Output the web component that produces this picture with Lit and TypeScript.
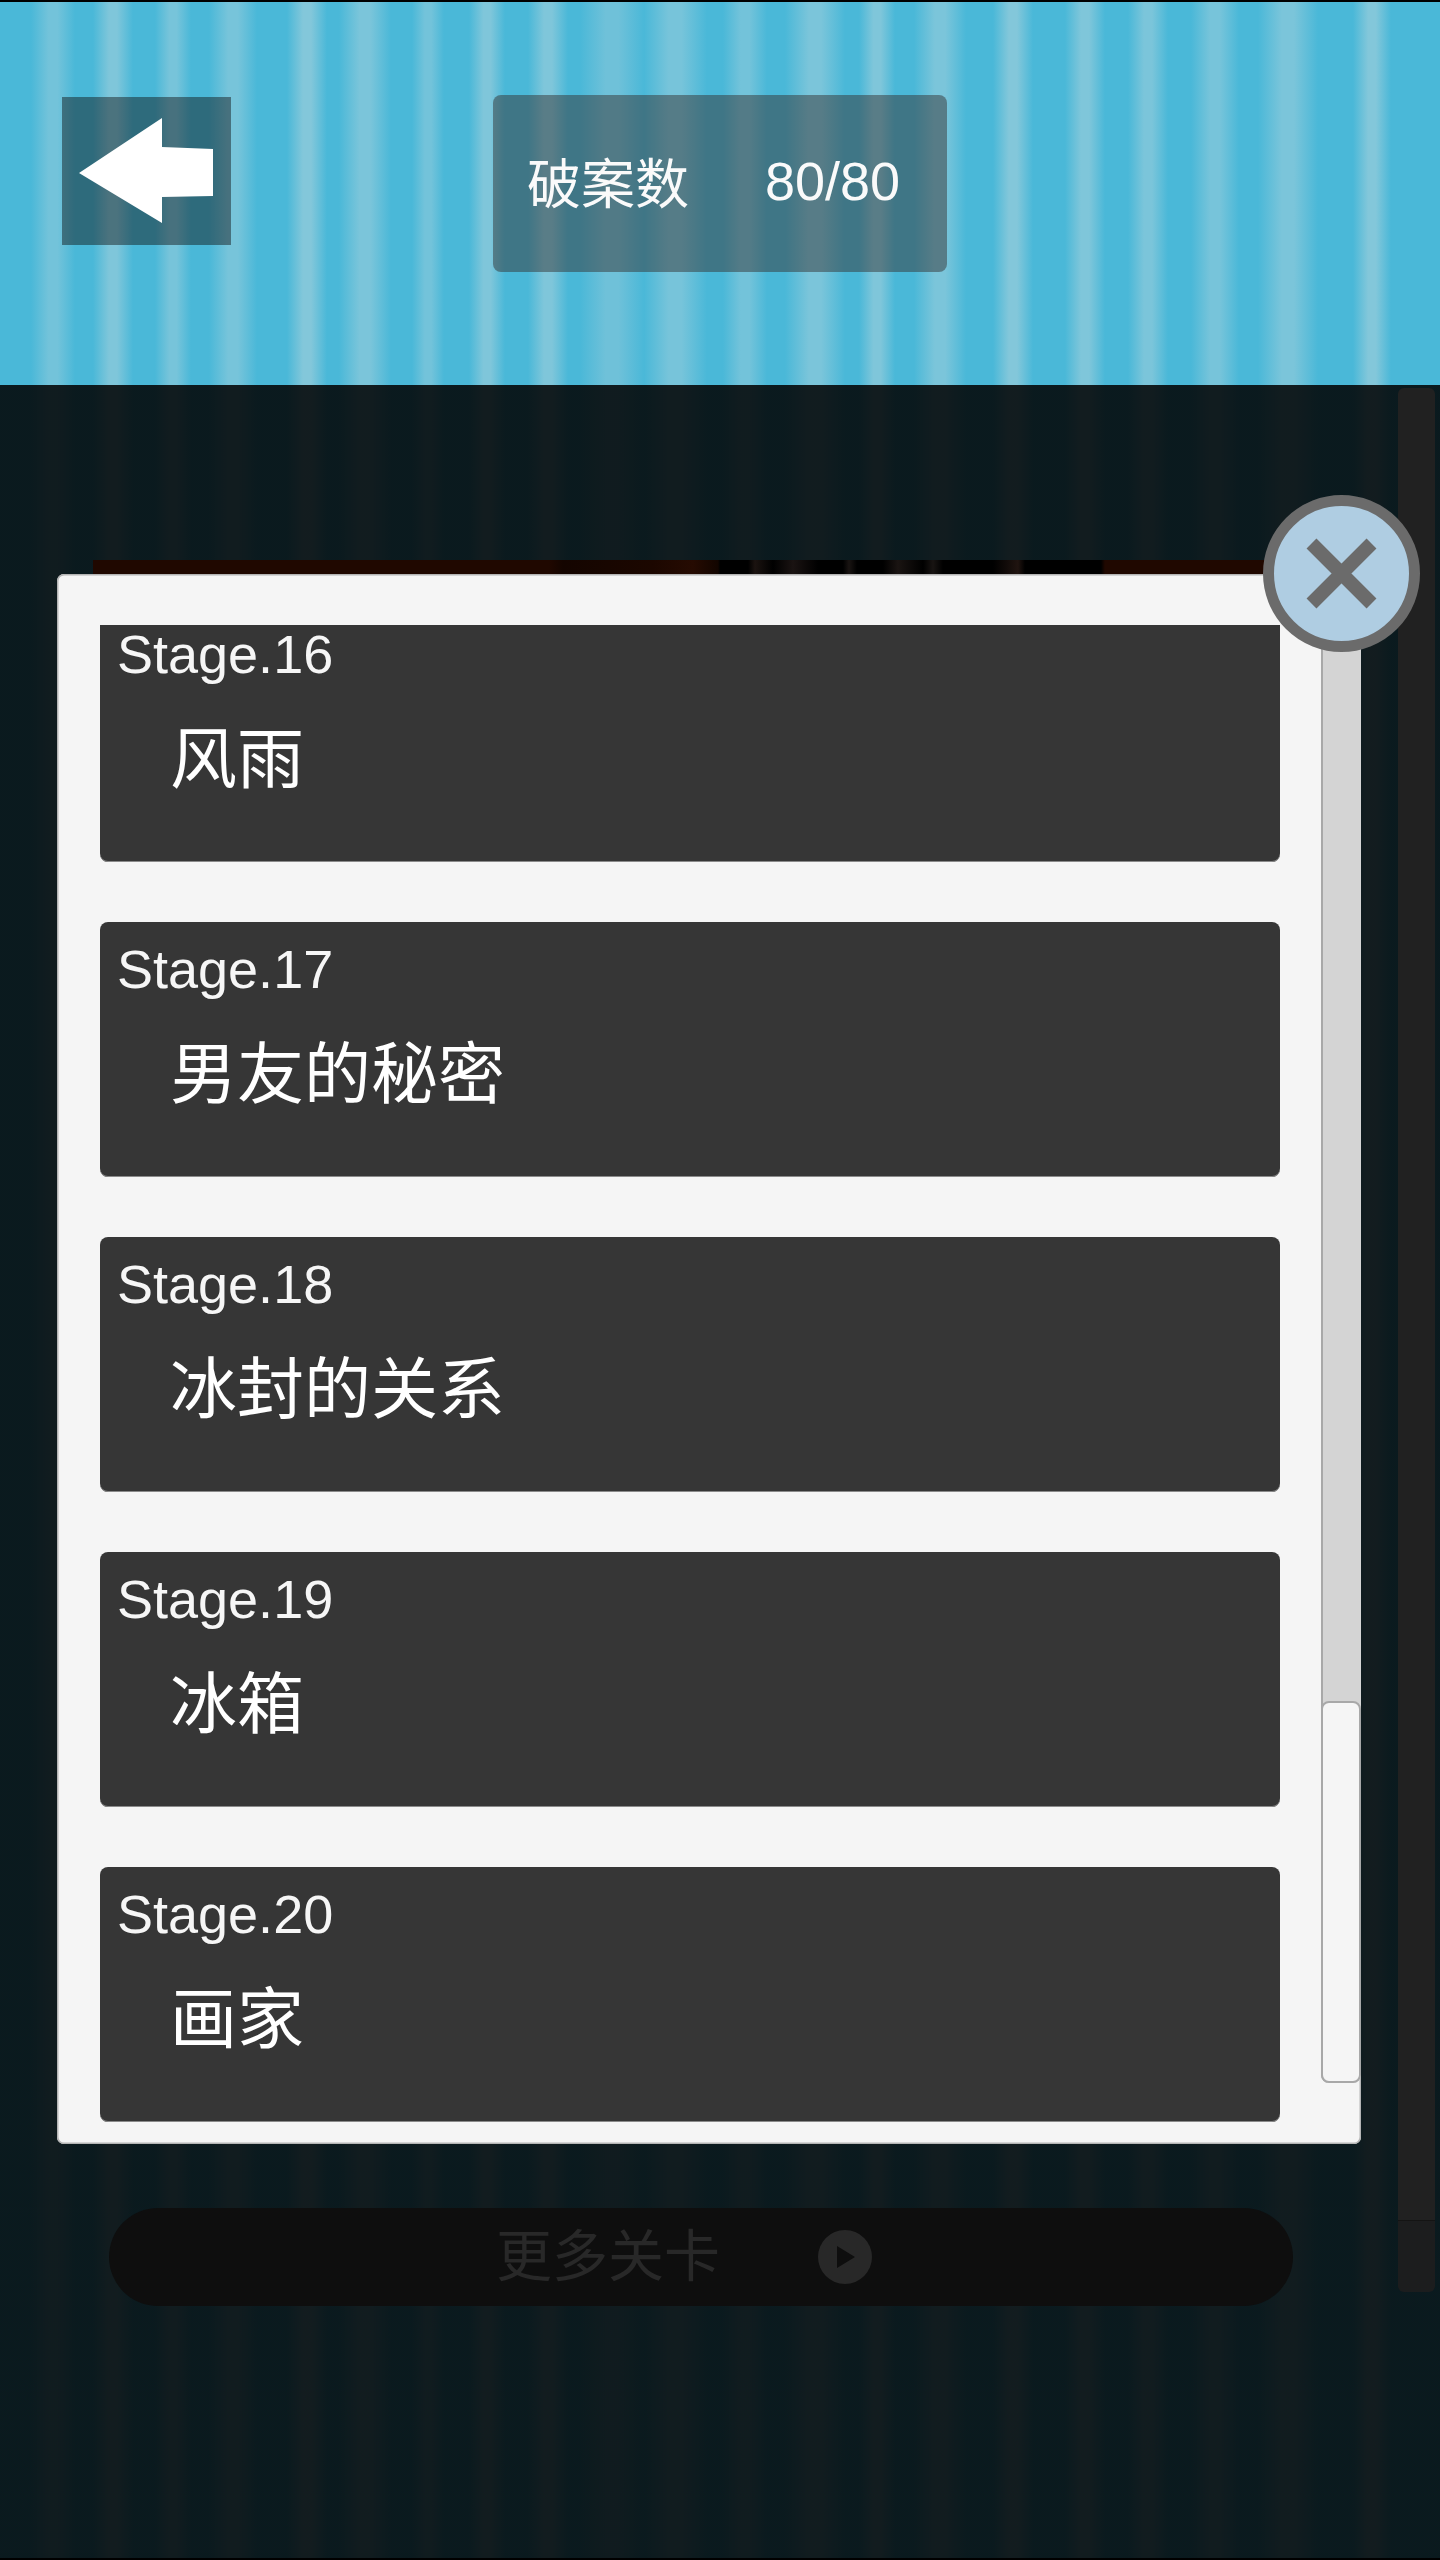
import { LitElement, html, css, unsafeCSS, svg } from "lit";
import { customElement } from "lit/decorators.js";

// centre x, half width, strength of the soft vertical bands
const bands: [number, number, number][] = [
  [53, 22, 0.5], [113, 20, 0.65], [173, 18, 0.55], [233, 24, 0.55], [307, 20, 0.7], [365, 26, 0.6],
  [428, 16, 0.5], [487, 18, 0.65], [548, 20, 0.65], [612, 32, 0.45], [675, 32, 0.55], [745, 22, 0.5],
  [815, 30, 0.6], [877, 18, 0.65], [940, 26, 0.6], [1013, 20, 0.7], [1085, 20, 0.65], [1148, 20, 0.6],
  [1215, 24, 0.55], [1288, 30, 0.6], [1372, 19, 0.7],
];
const base = [74, 184, 216];
const light = [156, 205, 219];
const mix = (t: number) => `rgb(${base.map((b, i) => Math.round(b + (light[i] - b) * t)).join(",")})`;
const stops: string[] = [`${mix(0)} 0px`];
for (const [c, w, s] of bands) {
  stops.push(`${mix(0)} ${c - w}px`, `${mix(s)} ${c - w * 0.2}px`, `${mix(s)} ${c + w * 0.2}px`, `${mix(0)} ${c + w}px`);
}
const stripes = unsafeCSS(`linear-gradient(90deg, ${stops.join(",")})`);

const stages = [
  { n: 16, t: "风雨" },
  { n: 17, t: "男友的秘密" },
  { n: 18, t: "冰封的关系" },
  { n: 19, t: "冰箱" },
  { n: 20, t: "画家" },
];

@customElement("app-root")
export class AppRoot extends LitElement {
  static styles = css`
    :host {
      display: block;
      width: 1440px;
      height: 2560px;
      background: #000;
      font-family: "Liberation Sans", "Noto Sans CJK SC", sans-serif;
      color: #fff;
    }
    .page { position: relative; width: 1440px; height: 2560px; padding: 2px 0; box-sizing: border-box; overflow: hidden; }

    .header { height: 383px; display: flex; align-items: flex-start; background: ${stripes}; }
    .back { width: 169px; height: 148px; margin: 95px 0 0 62px; background: rgba(14, 14, 14, 0.45); display: block; }
    .back svg { display: block; }
    .score {
      width: 454px; height: 177px; margin: 93px 0 0 262px; box-sizing: border-box;
      padding: 0 0 6px 34px; display: flex; align-items: center; gap: 76px;
      background: rgba(52, 52, 52, 0.5); border-radius: 8px; font-size: 54px; color: #fafafa;
    }

    .under {
      height: 2173px; display: flex; padding-right: 5px; box-sizing: border-box;
      background: linear-gradient(rgba(0, 0, 0, 0.86), rgba(0, 0, 0, 0.86)), ${stripes};
    }
    .main { flex: 1; padding: 175px 0 0 93px; }
    .banner {
      width: 1177px; height: 20px;
      background: linear-gradient(90deg,
        #200800 0, #200800 456px, #140500 470px, #1c0700 560px, #260b02 600px, #120500 625px,
        #000 627px, #000 655px, #1b1310 662px, #000 680px, #1a1312 700px, #000 725px, #000 750px,
        #191412 756px, #000 764px, #000 790px, #1a1412 805px, #000 830px, #181412 840px,
        #000 850px, #000 900px, #201410 925px, #000 932px, #000 1008px, #200800 1012px, #200800 1177px);
    }
    .more {
      width: 1184px; height: 98px; margin: 1628px 0 0 16px; padding-left: 387px; box-sizing: border-box;
      display: flex; align-items: center; gap: 98px;
      background: #0e0e0e; border-radius: 49px; font-size: 56px; color: #282828;
    }
    .more span { padding-bottom: 12px; }
    .more svg { display: block; }
    .rail { width: 37px; height: 1904px; margin-top: 3px; border-radius: 6px; overflow: hidden; display: flex; flex-direction: column; }
    .rail-track { flex: 1; background: #212121; }
    .rail-thumb { height: 71px; background: #1c1d1e; border-top: 1px solid #141414; }

    .modal {
      position: absolute; left: 57px; top: 574px; width: 1304px;
      height: 1570px; box-sizing: border-box; padding: 51px 0 0 43px;
      display: flex; gap: 41px; align-items: flex-start;
      background: #f5f5f5; border-radius: 7px;
      box-shadow: inset 0 0 0 1.5px #b4b4b4;
    }
    .viewport { width: 1180px; height: 1497px; overflow: hidden; flex: none; }
    .list { margin-top: -18px; display: flex; flex-direction: column; gap: 60px; }
    .item {
      height: 255px; box-sizing: border-box; padding-left: 17px;
      background: #363636; border-radius: 8px; box-shadow: inset 0 -1px 0 #8a8a8a;
    }
    .stage { font-size: 54px; line-height: 50px; padding-top: 22px; color: #f6f6f6; }
    .title { font-size: 67px; line-height: 90px; padding: 36px 0 0 53px; color: #fff; }
    .bar {
      width: 40px; height: 1458px; flex: none; box-sizing: border-box;
      background: #d4d4d4; border-radius: 0 0 8px 8px;
      display: flex; flex-direction: column; justify-content: flex-end;
      border-left: 2px solid #a8a8a8;
    }
    .thumb {
      height: 382px; margin-left: -2px; box-sizing: border-box; background: #f5f5f5;
      border: 2px solid #a8a8a8; border-radius: 8px;
    }
    .close { position: absolute; left: 1263px; top: 495px; display: block; }
  `;

  render() {
    return html`
      <div class="page">
        <div class="header">
          <div class="back">
            <svg width="169" height="148" viewBox="0 0 169 148">
              <path d="M17 76 L100 21 V50 L151 52 V99 L100 100 V126 Z" fill="#fff" />
            </svg>
          </div>
          <div class="score"><span>破案数</span><span>80/80</span></div>
        </div>
        <div class="under">
          <div class="main">
            <div class="banner"></div>
            <div class="more">
              <span>更多关卡</span>
              <svg width="54" height="54" viewBox="0 0 54 54">
                <circle cx="27" cy="27" r="27" fill="#282828" />
                <path d="M19 16 L37 27 L19 38 Z" fill="#0e0e0e" />
              </svg>
            </div>
          </div>
          <div class="rail"><div class="rail-track"></div><div class="rail-thumb"></div></div>
        </div>
        <div class="modal">
          <div class="viewport">
            <div class="list">
              ${stages.map(
                (s) => html`<div class="item">
                  <div class="stage">Stage.${s.n}</div>
                  <div class="title">${s.t}</div>
                </div>`
              )}
            </div>
          </div>
          <div class="bar"><div class="thumb"></div></div>
        </div>
        <svg class="close" width="157" height="157" viewBox="0 0 157 157">
          <circle cx="78.5" cy="78.5" r="73" fill="#afcde2" stroke="#6b6b6b" stroke-width="11" />
          ${svg`<path d="M48.5 48.5 L108.5 108.5 M108.5 48.5 L48.5 108.5" stroke="#6b6b6b" stroke-width="14" fill="none" />`}
        </svg>
      </div>
    `;
  }
}
